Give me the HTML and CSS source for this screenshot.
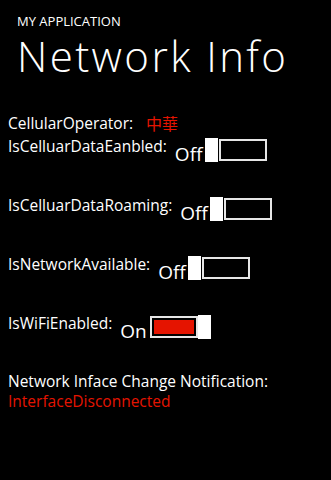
FILE: index.html
```html
<!DOCTYPE html>
<html>
<head>
<meta charset="utf-8">
<link rel="stylesheet" href="styles.css">
</head>
<body>
<div class="page">
  <div class="app-title">MY APPLICATION</div>
  <div class="page-title">Network Info</div>
  <div class="content">
    <div class="operator-row">
      <span class="label">CellularOperator:</span>
      <span class="operator">中華</span>
    </div>
    <div class="toggle-row">
      <span class="label">IsCelluarDataEanbled:</span>
      <div class="toggle">
        <span class="state">Off</span>
        <span class="thumb"></span>
        <span class="track"></span>
      </div>
    </div>
    <div class="toggle-row">
      <span class="label">IsCelluarDataRoaming:</span>
      <div class="toggle">
        <span class="state">Off</span>
        <span class="thumb"></span>
        <span class="track"></span>
      </div>
    </div>
    <div class="toggle-row">
      <span class="label">IsNetworkAvailable:</span>
      <div class="toggle">
        <span class="state">Off</span>
        <span class="thumb"></span>
        <span class="track"></span>
      </div>
    </div>
    <div class="toggle-row">
      <span class="label">IsWiFiEnabled:</span>
      <div class="toggle on">
        <span class="state">On</span>
        <span class="track"><span class="fill"></span></span>
        <span class="thumb"></span>
      </div>
    </div>
    <div class="notify">
      <div class="label">Network Inface Change Notification:</div>
      <div class="notify-value">InterfaceDisconnected</div>
    </div>
  </div>
</div>
</body>
</html>
```
FILE: styles.css
```css
html, body {
  margin: 0;
  padding: 0;
  background: #000;
}
body {
  width: 331px;
  height: 480px;
  overflow: hidden;
  color: #fff;
  font-family: "Open Sans", "Noto Sans", sans-serif;
}
.app-title {
  padding: 11px 0 0 17px;
  font-size: 13px;
  line-height: 20px;
  font-weight: 400;
}
.page-title {
  padding: 1px 0 0 17px;
  font-size: 42px;
  line-height: 48px;
  font-weight: 300;
  letter-spacing: 2.4px;
  white-space: nowrap;
}
.content {
  padding: 32px 0 0 8px;
}
.label {
  font-size: 15.5px;
  line-height: 22px;
  white-space: nowrap;
}
.operator-row {
  display: flex;
  align-items: flex-start;
  height: 23px;
}
.operator {
  margin-left: 13px;
  color: #e51400;
  font-family: "Noto Sans CJK TC", sans-serif;
  font-size: 16px;
  line-height: 22px;
}
.toggle-row {
  display: flex;
  align-items: flex-start;
  height: 59px;
}
.toggle {
  display: flex;
  align-items: center;
  margin: 3px 0 0 8px;
  height: 24px;
}
.state {
  width: 30px;
  align-self: flex-end;
  font-size: 19px;
  line-height: 20px;
  margin-bottom: -2px;
  font-weight: 400;
}
.thumb {
  width: 13px;
  height: 24px;
  background: #fff;
}
.track {
  box-sizing: border-box;
  width: 48px;
  height: 22px;
  margin-left: 1px;
  border: 2px solid #e6e6e6;
  background: #000;
  display: flex;
  padding: 2px;
}
.toggle.on .track {
  margin-left: 0;
}
.fill {
  flex: 1;
  background: #e51400;
}
.notify .label {
  line-height: 20px;
}
.notify-value {
  color: #e51400;
  font-size: 15.5px;
  line-height: 20px;
}
```
